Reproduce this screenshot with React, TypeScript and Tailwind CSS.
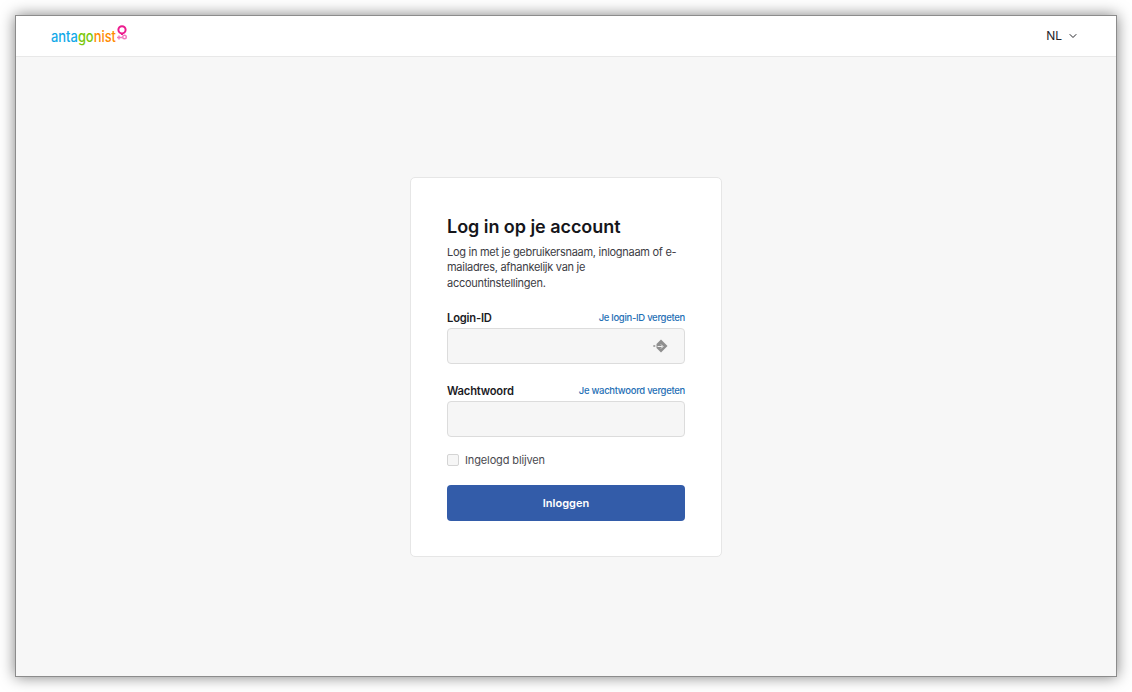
import { ChevronDown } from "lucide-react";

const font = { fontFamily: "Inter, 'Liberation Sans', sans-serif" };

const Logo = () => (
  <div className="relative flex h-[40px] w-[78px] items-center">
    <span className="mt-[1px] origin-left scale-x-[0.86] text-[15px] leading-none font-medium whitespace-nowrap">
      <span className="text-[#12a9e8]">anta</span>
      <span className="text-[#7ac70c]">go</span>
      <span className="text-[#ff8a00]">nist</span>
    </span>
    <svg className="absolute top-[9px] left-[65px]" width="13" height="17" viewBox="0 0 13 17" fill="none">
      <circle cx="6" cy="4.8" r="3.6" stroke="#ec1b8e" strokeWidth="2" />
      <path d="M6 8.5v1.5" stroke="#ec1b8e" strokeWidth="2" />
      <circle cx="8.5" cy="12" r="1.8" stroke="#f178bd" strokeWidth="1.4" />
      <path d="M1 12.5h5M3 10.5v4" stroke="#f178bd" strokeWidth="1.4" />
    </svg>
  </div>
);

const FieldHeader = ({ label, link }: { label: string; link: string }) => (
  <div className="flex items-center justify-between">
    <label className="text-[11.2px] leading-[18px] font-semibold tracking-[-0.2px] text-[#1b1b1f]">{label}</label>
    <a className="text-[9.5px] leading-[18px] font-medium tracking-[-0.3px] text-[#1f6fb5]">{link}</a>
  </div>
);

export default function App() {
  return (
    <div className="h-[692px] w-[1132px] bg-white p-[15px]" style={font}>
      <div className="flex h-[662px] w-[1102px] flex-col border border-[#8c8c8c] bg-[#f7f7f7] shadow-[0_0_14px_rgba(0,0,0,0.5)]">
        <header className="flex h-[41px] shrink-0 items-center justify-between border-b border-[#e8e8e8] bg-white pr-[37px] pl-[35px]">
          <Logo />
          <div className="flex items-center gap-[5px] text-[#26262b]">
            <span className="text-[12px]">NL</span>
            <ChevronDown size={12} strokeWidth={2} />
          </div>
        </header>

        <main className="flex flex-1 items-start justify-center pt-[120px]">
          <div className="flex h-[380px] w-[312px] flex-col rounded-[5px] border border-[#e6e6e6] bg-white px-[36px] pt-[37px]">
            <h1 className="text-[18px] leading-[24px] font-semibold tracking-[-0.05px] text-[#15151a]">Log in op je account</h1>
            <p className="mt-[5.5px] text-[11px] leading-[15.5px] tracking-[-0.28px] text-[#3c3c44]">
              Log in met je gebruikersnaam, inlognaam of e-
              <br />
              mailadres, afhankelijk van je
              <br />
              accountinstellingen.
            </p>

            <div className="mt-[18px]">
              <FieldHeader label="Login-ID" link="Je login-ID vergeten" />
              <div className="mt-[1px] flex h-[36px] items-center justify-end rounded-[4px] border border-[#dcdcdc] bg-[#f6f6f6] pr-[16px] pb-[1px]">
                <svg width="15" height="14" viewBox="0 0 15 14" fill="none">
                  <path d="M8 0.5 14.5 7 8 13.5 3.5 9 3.5 5Z" fill="#8f8f8f" />
                  <path d="M4.5 7.5H9.5M8 5.5 10 7.5 8 9.5" stroke="#efefef" strokeWidth="1" />
                  <rect x="0.3" y="6" width="2" height="2" fill="#a8a8a8" />
                </svg>
              </div>
            </div>

            <div className="mt-[18px]">
              <FieldHeader label="Wachtwoord" link="Je wachtwoord vergeten" />
              <div className="mt-[1px] h-[36px] rounded-[4px] border border-[#dcdcdc] bg-[#f6f6f6]" />
            </div>

            <div className="mt-[16px] flex items-center gap-[6px]">
              <span className="h-[12px] w-[12px] rounded-[2px] border border-[#d4d4d4] bg-[#f6f6f6]" />
              <span className="text-[11px] leading-[14px] tracking-[-0.13px] text-[#4a4a50]">Ingelogd blijven</span>
            </div>

            <button className="mt-[18px] h-[36px] w-full rounded-[4px] bg-[#335ca9] text-[11px] font-semibold text-white">
              Inloggen
            </button>
          </div>
        </main>
      </div>
    </div>
  );
}
